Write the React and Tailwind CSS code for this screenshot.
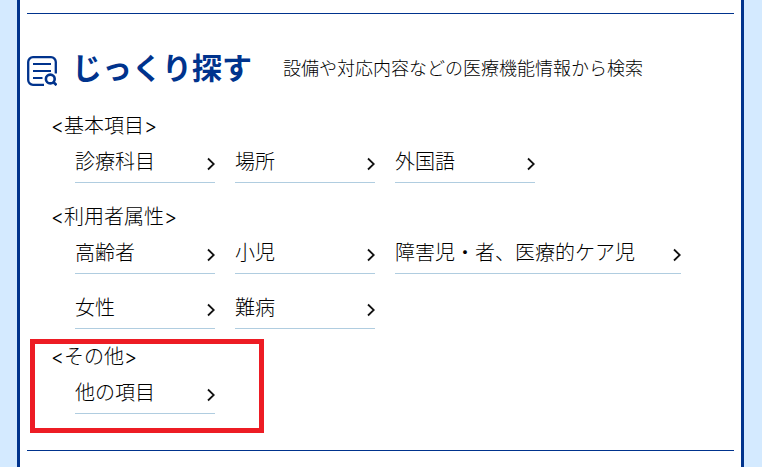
import React from "react";

function SearchListIcon() {
  return (
    <svg
      xmlns="http://www.w3.org/2000/svg"
      width="30"
      height="30"
      viewBox="0 0 30 30"
      fill="none"
      stroke="currentColor"
      strokeWidth={2.3}
      aria-hidden="true"
    >
      <path d="M17 28.8H6a4.8 4.8 0 0 1-4.8-4.8V6A4.8 4.8 0 0 1 6 1.2h18A4.8 4.8 0 0 1 28.8 6v11.5" />
      <path d="M6 8h18M6 15h18M6 22h9.5" strokeWidth={2} />
      {/* magnifying glass */}
      <circle cx="23.3" cy="23" r="4.4" strokeWidth={2.6} />
      <path d="m26.3 26 3.2 3.2" strokeWidth={2.6} />
    </svg>
  );
}

function ChevronIcon() {
  return (
    <svg
      xmlns="http://www.w3.org/2000/svg"
      width="8"
      height="14"
      viewBox="0 0 8 14"
      fill="none"
      stroke="#111"
      strokeWidth={1.8}
      className="shrink-0"
      aria-hidden="true"
    >
      <path d="M1 1.5 6.8 7 1 12.5" />
    </svg>
  );
}

function SearchLink({ children }) {
  return (
    <a
      href="#"
      className="flex min-w-[140px] items-center justify-between gap-[38px] border-b border-[#b0cde0] pt-px leading-10"
    >
      <span>{children}</span>
      <span className="pt-1">
        <ChevronIcon />
      </span>
    </a>
  );
}

function SearchGroup({ title, items, className = "" }) {
  return (
    <section className={`pb-[13px] pl-6 ${className}`}>
      <h3 className="leading-[30px]">&lt;{title}&gt;</h3>
      <ul className="flex flex-wrap gap-x-5 gap-y-[13px] pl-6">
        {items.map((item) => (
          <li key={item}>
            <SearchLink>{item}</SearchLink>
          </li>
        ))}
      </ul>
    </section>
  );
}

function App() {
  return (
    <div className="min-h-screen bg-[#d4eaff] pr-[18px] pl-[17px] font-['Inter','Noto_Sans_CJK_JP',sans-serif] text-xl font-light text-black">
      <main className="min-h-screen border-x-3 border-[#00338d] bg-white px-[7px] pt-[13px]">
        <div className="border-y border-[#00338d] pt-8 pb-[23px]">
          <header className="mb-5 flex items-center text-[#00338d]">
            <span className="pt-1">
              <SearchListIcon />
            </span>
            <h2 className="ml-[15px] text-3xl leading-[45px] font-bold">じっくり探す</h2>
            <p className="ml-[31px] text-lg text-black">
              設備や対応内容などの医療機能情報から検索
            </p>
          </header>

          <SearchGroup
            title="基本項目"
            items={["診療科目", "場所", "外国語"]}
            className="mb-1.5"
          />
          <SearchGroup
            title="利用者属性"
            items={["高齢者", "小児", "障害児・者、医療的ケア児", "女性", "難病"]}
          />
          <div className="relative">
            <SearchGroup title="その他" items={["他の項目"]} />
            {/* red frame around the last group */}
            <div className="pointer-events-none absolute -top-[3px] -bottom-1.5 left-[3px] w-[234px] border-5 border-[#ed1c24]" />
          </div>
        </div>
      </main>
    </div>
  );
}

export default App;
